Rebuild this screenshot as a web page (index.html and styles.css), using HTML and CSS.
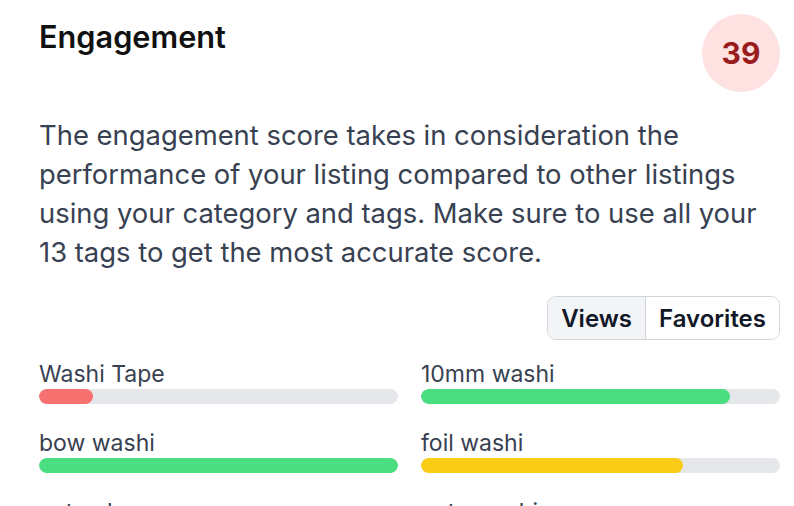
FILE: index.html
```html
<!DOCTYPE html>
<html lang="en">
<head>
    <meta charset="UTF-8">
    <meta name="viewport" content="width=device-width, initial-scale=1.0">
    <title>Engagement</title>
    <link rel="stylesheet" href="styles.css">
</head>
<body>

    <div class="card">
        <div class="card-header">
            <h2 class="title">Engagement</h2>
            <div class="score">39</div>
        </div>

        <p class="description">
            The engagement score takes in consideration the performance of your listing compared to other listings using your category and tags. Make sure to use all your 13 tags to get the most accurate score.
        </p>

        <div class="toggle-row">
            <div class="toggle">
                <button class="toggle-btn active">Views</button>
                <button class="toggle-btn">Favorites</button>
            </div>
        </div>

        <div class="tags">
            <div class="tag">
                <span class="tag-name">Washi Tape</span>
                <div class="bar"><div class="bar-fill red" style="width: 15%"></div></div>
            </div>
            <div class="tag">
                <span class="tag-name">10mm washi</span>
                <div class="bar"><div class="bar-fill green" style="width: 86%"></div></div>
            </div>
            <div class="tag">
                <span class="tag-name">bow washi</span>
                <div class="bar"><div class="bar-fill green" style="width: 100%"></div></div>
            </div>
            <div class="tag">
                <span class="tag-name">foil washi</span>
                <div class="bar"><div class="bar-fill yellow" style="width: 73%"></div></div>
            </div>
            <div class="tag">
                <span class="tag-name">cute planner</span>
                <div class="bar"><div class="bar-fill green" style="width: 60%"></div></div>
            </div>
            <div class="tag">
                <span class="tag-name">cute washi</span>
                <div class="bar"><div class="bar-fill green" style="width: 80%"></div></div>
            </div>
        </div>
    </div>

</body>
</html>
```

FILE: styles.css
```css
* {
    margin: 0;
    padding: 0;
    box-sizing: border-box;
}

body {
    font-family: Inter, "Noto Sans", sans-serif;
    background: #fff;
    color: #374151;
}

.card {
    padding: 14px 14px 0 39px;
}

.card-header {
    display: flex;
    justify-content: space-between;
    align-items: flex-start;
}

.title {
    font-size: 30.7px;
    font-weight: 600;
    color: #111;
    margin-top: 5px;
    line-height: 36px;
}

.score {
    width: 78px;
    height: 78px;
    border-radius: 50%;
    background-color: #fee2e2;
    color: #991b1b;
    font-size: 30px;
    font-weight: 700;
    display: flex;
    align-items: center;
    justify-content: center;
}

.description {
    font-size: 27.4px;
    line-height: 39px;
    margin-top: 24px;
}

/* Botones */
.toggle-row {
    display: flex;
    justify-content: flex-end;
    margin-top: 24px;
}

.toggle {
    display: flex;
    border: 1.5px solid #d1d5db;
    border-radius: 9px;
    overflow: hidden;
}

.toggle-btn {
    font-family: inherit;
    font-size: 24px;
    font-weight: 600;
    color: #111827;
    background: #fff;
    border: none;
    height: 42px;
    padding: 0 13px;
    cursor: pointer;
}

.toggle-btn.active {
    background-color: #f3f4f6;
    border-right: 1.5px solid #d1d5db;
}

.tags {
    display: grid;
    grid-template-columns: 1fr 1fr;
    column-gap: 23px;
    row-gap: 24px;
    margin-top: 19px;
}

.tag-name {
    display: block;
    font-size: 23px;
    line-height: 30px;
}

.bar {
    height: 15px;
    border-radius: 8px;
    background-color: #e5e7eb;
    overflow: hidden;
}

.bar-fill {
    height: 100%;
    border-radius: 8px;
}

.red { background-color: #f87171; }
.green { background-color: #4ade80; }
.yellow { background-color: #facc15; }
```
